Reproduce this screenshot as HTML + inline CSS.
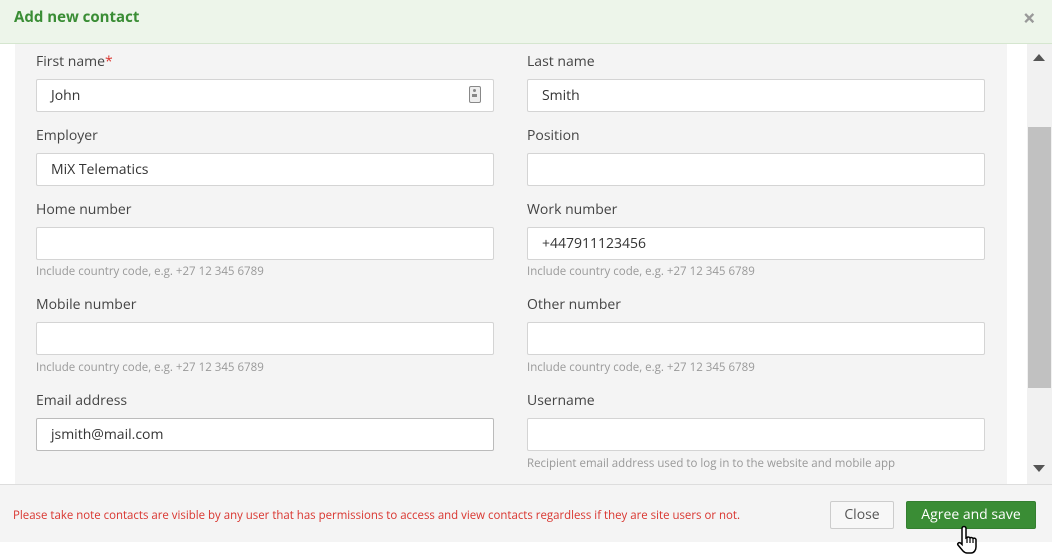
<!DOCTYPE html>
<html><head><style>
body{margin:0;width:1052px;height:556px;position:relative;overflow:hidden;background:#fff;font-family:"Open Sans","Liberation Sans",sans-serif;color:#333}
.hdr{position:absolute;left:0;top:0;width:1052px;height:43px;background:#edf5ea;border-bottom:1px solid #d5e6cf}
.hdr .t{position:absolute;left:14px;top:7px;font-size:15px;font-weight:bold;color:#3a8d35}
.hdr .x{position:absolute;left:1023px;top:3px;font-size:22px;color:#999;font-weight:bold}
.panel{position:absolute;left:15px;top:44px;width:992px;height:440px;background:#f4f4f4}
.sb{position:absolute;left:1027px;top:44px;width:25px;height:440px;background:#f1f1f1}
.thumb{position:absolute;left:1028px;top:127px;width:23px;height:261px;background:#c1c1c1}
.lab{position:absolute;font-size:14px;color:#444;line-height:18px}
.inp{position:absolute;width:458px;height:33px;background:#fff;border:1px solid #d4d4d4;border-radius:2px;font-size:14px;line-height:31px;box-sizing:border-box;padding-left:14px;color:#333}
.hint{position:absolute;font-size:11.5px;color:#999;line-height:14px}
.foot{position:absolute;left:0;top:484px;width:1052px;height:57px;background:#f4f4f4;border-top:1px solid #ddd}
.msg{position:absolute;left:13px;top:508px;font-size:11.45px;color:#d9352f}
.btn{position:absolute;top:501px;height:28px;box-sizing:border-box;font-size:14px;line-height:26px;text-align:center;border-radius:2px}
</style></head><body>
<div class="hdr"><div class="t">Add new contact</div><div class="x">×</div></div>
<div class="panel"></div>
<div class="sb"></div><div class="thumb"></div>
<div style="position:absolute;left:1033px;top:54px;width:0;height:0;border-left:6px solid transparent;border-right:6px solid transparent;border-bottom:7px solid #555"></div>
<div style="position:absolute;left:1033px;top:465px;width:0;height:0;border-left:6px solid transparent;border-right:6px solid transparent;border-top:7px solid #555"></div>

<div class="lab" style="left:36px;top:53px">First name<span style="color:#d9352f">*</span></div>
<div class="inp" style="left:36px;top:79px">John</div>
<div style="position:absolute;left:469px;top:86px;width:12px;height:17px;border:1.5px solid #888;border-radius:2px;box-sizing:border-box;background:#eee"><div style="position:absolute;left:3px;top:2px;width:3px;height:3px;background:#888;border-radius:50%"></div><div style="position:absolute;left:2px;top:7px;width:5px;height:3px;background:#888"></div></div>
<div class="lab" style="left:527px;top:53px">Last name</div>
<div class="inp" style="left:527px;top:79px">Smith</div>

<div class="lab" style="left:36px;top:127px">Employer</div>
<div class="inp" style="left:36px;top:153px">MiX Telematics</div>
<div class="lab" style="left:527px;top:127px">Position</div>
<div class="inp" style="left:527px;top:153px"></div>

<div class="lab" style="left:36px;top:201px">Home number</div>
<div class="inp" style="left:36px;top:227px"></div>
<div class="hint" style="left:36px;top:265px">Include country code, e.g. +27 12 345 6789</div>
<div class="lab" style="left:527px;top:201px">Work number</div>
<div class="inp" style="left:527px;top:227px">+447911123456</div>
<div class="hint" style="left:527px;top:265px">Include country code, e.g. +27 12 345 6789</div>

<div class="lab" style="left:36px;top:296px">Mobile number</div>
<div class="inp" style="left:36px;top:322px"></div>
<div class="hint" style="left:36px;top:361px">Include country code, e.g. +27 12 345 6789</div>
<div class="lab" style="left:527px;top:296px">Other number</div>
<div class="inp" style="left:527px;top:322px"></div>
<div class="hint" style="left:527px;top:361px">Include country code, e.g. +27 12 345 6789</div>

<div class="lab" style="left:36px;top:392px">Email address</div>
<div class="inp" style="left:36px;top:418px;border-color:#bbb">jsmith@mail.com</div>
<div class="lab" style="left:527px;top:392px">Username</div>
<div class="inp" style="left:527px;top:418px"></div>
<div class="hint" style="left:527px;top:457px">Recipient email address used to log in to the website and mobile app</div>

<div class="foot"></div>
<div class="msg">Please take note contacts are visible by any user that has permissions to access and view contacts regardless if they are site users or not.</div>
<div class="btn" style="left:830px;width:64px;border:1px solid #ccc;background:#f7f7f7;color:#555">Close</div>
<div class="btn" style="left:906px;width:130px;background:#3a8d35;color:#fff;border:1px solid #347f30">Agree and save</div>
<svg style="position:absolute;left:955px;top:525px" width="30" height="30" viewBox="0 0 30 30"><path d="M7 3.5a2 2 0 0 1 4 0V13l1-.5a2 2 0 0 1 3 .5a2 2 0 0 1 3 .5a2 2 0 0 1 3 1V22c0 3-2 6-5 6h-4c-2 0-3-1-4-2l-5-6c-1-1.5 1-3 2.5-2L7 19.5Z" fill="#fff" stroke="#000" stroke-width="1.5"/><path d="M12 13v5M15 13.5v4.5M18 14v4" stroke="#000" stroke-width="1.2"/></svg>
</body></html>
